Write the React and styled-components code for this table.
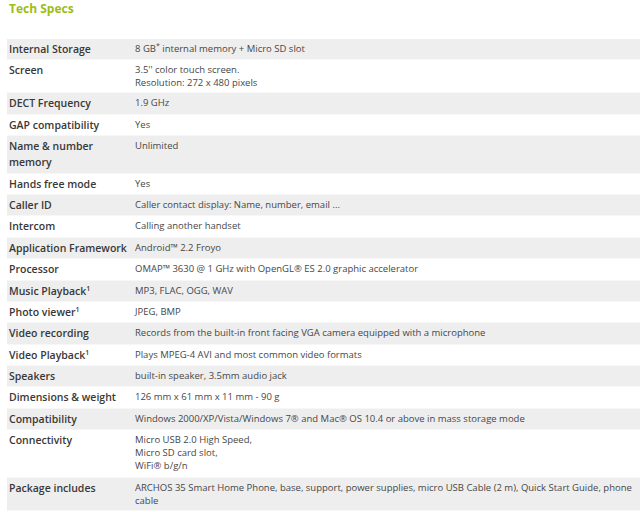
import React from 'react';
import styled, { createGlobalStyle } from 'styled-components';

const GlobalStyle = createGlobalStyle`
  html, body {
    margin: 0;
    padding: 0;
    background: #ffffff;
    overflow: hidden;
  }
`;

const Page = styled.div`
  padding: 0 0 0 7px;
  width: 640px;
  font-family: "Open Sans", "DejaVu Sans", sans-serif;
`;

const Title = styled.h3`
  margin: 0;
  padding: 1px 0 0 2px;
  height: 38px;
  font-size: 12px;
  line-height: 16px;
  font-weight: 700;
  color: #9bbd1a;
`;

const SpecTable = styled.table`
  width: 640px;
  border-collapse: collapse;
  border-spacing: 0;
`;

const Row = styled.tr`
  background: ${(p) => (p.$shaded ? '#eeeeee' : '#ffffff')};
  border-bottom: 1px solid #f7f7f7;
`;

const Label = styled.td`
  width: 124px;
  padding: 2px 0 2.4px 2px;
  vertical-align: top;
  font-size: 10.5px;
  line-height: 16px;
  font-weight: 600;
  color: #383838;
`;

const Value = styled.td`
  padding: 3px 12px ${(p) => (p.$extra ? '5px' : '3px')} 2px;
  vertical-align: top;
  font-size: 9.5px;
  line-height: 13px;
  color: #474747;
`;

const Sup = styled.sup`
  font-size: 7px;
  line-height: 0;
  vertical-align: 4px;
`;

const specs = [
  { label: 'Internal Storage', value: <>8 GB<Sup>*</Sup> internal memory + Micro SD slot</> },
  { label: 'Screen', value: <>3.5'' color touch screen.<br />Resolution: 272 x 480 pixels</> },
  { label: 'DECT Frequency', value: '1.9 GHz' },
  { label: 'GAP compatibility', value: 'Yes' },
  { label: <>Name &amp; number<br />memory</>, value: 'Unlimited' },
  { label: 'Hands free mode', value: 'Yes' },
  { label: 'Caller ID', value: 'Caller contact display: Name, number, email ...' },
  { label: 'Intercom', value: 'Calling another handset' },
  { label: 'Application Framework', value: 'Android™ 2.2 Froyo' },
  { label: 'Processor', value: 'OMAP™ 3630 @ 1 GHz with OpenGL® ES 2.0 graphic accelerator' },
  { label: <>Music Playback<Sup>1</Sup></>, value: 'MP3, FLAC, OGG, WAV' },
  { label: <>Photo viewer<Sup>1</Sup></>, value: 'JPEG, BMP' },
  { label: 'Video recording', value: 'Records from the built-in front facing VGA camera equipped with a microphone' },
  { label: <>Video Playback<Sup>1</Sup></>, value: 'Plays MPEG-4 AVI and most common video formats' },
  { label: 'Speakers', value: 'built-in speaker, 3.5mm audio jack' },
  { label: 'Dimensions & weight', value: '126 mm x 61 mm x 11 mm - 90 g' },
  { label: 'Compatibility', value: 'Windows 2000/XP/Vista/Windows 7® and Mac® OS 10.4 or above in mass storage mode' },
  { label: 'Connectivity', value: <>Micro USB 2.0 High Speed,<br />Micro SD card slot,<br />WiFi® b/g/n</>, extra: true },
  { label: 'Package includes', value: 'ARCHOS 35 Smart Home Phone, base, support, power supplies, micro USB Cable (2 m), Quick Start Guide, phone cable' },
];

export default function App() {
  return (
    <Page>
      <GlobalStyle />
      <Title>Tech Specs</Title>
      <SpecTable>
        <tbody>
          {specs.map((s, i) => (
            <Row key={i} $shaded={i % 2 === 0}>
              <Label>{s.label}</Label>
              <Value $extra={s.extra}>{s.value}</Value>
            </Row>
          ))}
        </tbody>
      </SpecTable>
    </Page>
  );
}
